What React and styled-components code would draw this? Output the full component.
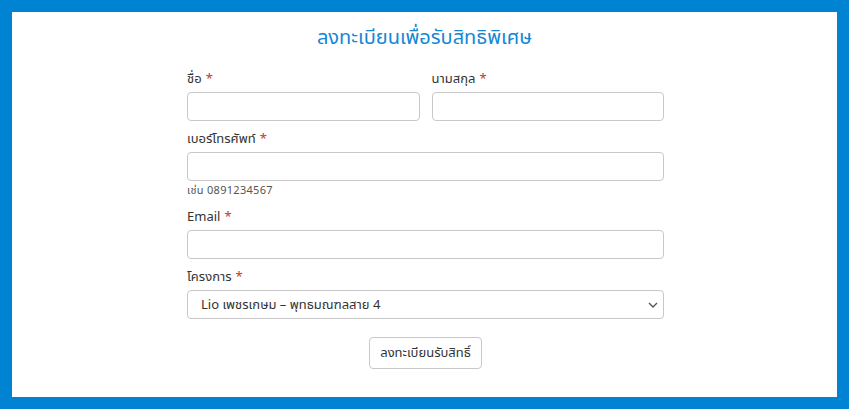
import React from "react";
import styled, { createGlobalStyle } from "styled-components";

const Global = createGlobalStyle`
  html, body { margin: 0; padding: 0; }
  body { font-family: "Noto Sans Thai", "Noto Sans", "DejaVu Sans", sans-serif; color: #333; }
`;

const Frame = styled.div`
  box-sizing: border-box;
  width: 849px;
  height: 409px;
  border: 12px solid #0083d3;
  background: #fff;
  display: flex;
  flex-direction: column;
  align-items: center;
`;

const Title = styled.h1`
  margin: 13px 0 19px;
  font-size: 20px;
  line-height: 26px;
  font-weight: 400;
  color: #1487d4;
`;

const Form = styled.form`
  width: 477px;
  margin-left: 2px;
  display: flex;
  flex-direction: column;
`;

const Row = styled.div`
  display: grid;
  grid-template-columns: ${(p) => (p.$cols === 2 ? "1fr 1fr" : "1fr")};
  gap: 12px;
  margin-bottom: ${(p) => p.$mb || 0}px;
`;

const Field = styled.div`
  display: flex;
  flex-direction: column;
`;

const Label = styled.label`
  font-size: 13px;
  line-height: 18px;
  color: #333;
  margin-bottom: 4px;
`;

const Star = styled.span`
  color: #c0392b;
  margin-left: 4px;
`;

const Input = styled.input`
  box-sizing: border-box;
  height: 29px;
  width: 100%;
  margin: 0;
  border: 1px solid #c8c8c8;
  border-radius: 4px;
  background: #fff;
  font: inherit;
  font-size: 13px;
`;

const Help = styled.div`
  font-size: 11px;
  color: #555;
  margin-top: 2px;
  line-height: 15px;
  letter-spacing: 0.3px;
`;

const Select = styled.select`
  box-sizing: border-box;
  appearance: none;
  -webkit-appearance: none;
  height: 29px;
  width: 100%;
  margin: 0;
  border: 1px solid #c8c8c8;
  border-radius: 4px;
  background: #fff
    url("data:image/svg+xml,%3Csvg xmlns='http://www.w3.org/2000/svg' width='10' height='6' viewBox='0 0 10 6'%3E%3Cpath d='M1 1l4 4 4-4' fill='none' stroke='%23555' stroke-width='1.4'/%3E%3C/svg%3E")
    no-repeat right 5px center;
  font: inherit;
  font-size: 13px;
  color: #333;
  padding: 0 24px 0 13px;
`;

const Actions = styled.div`
  display: flex;
  justify-content: center;
  margin-top: 18px;
`;

const Button = styled.button`
  box-sizing: border-box;
  height: 32px;
  padding: 0 10px;
  border: 1px solid #c8c8c8;
  border-radius: 4px;
  background: #fff;
  font: inherit;
  font-size: 13px;
  color: #333;
`;

export default function App() {
  return (
    <>
      <Global />
      <Frame>
        <Title>ลงทะเบียนเพื่อรับสิทธิพิเศษ</Title>
        <Form>
          <Row $cols={2} $mb={9}>
            <Field>
              <Label>ชื่อ<Star>*</Star></Label>
              <Input />
            </Field>
            <Field>
              <Label>นามสกุล<Star>*</Star></Label>
              <Input />
            </Field>
          </Row>
          <Row $mb={10}>
            <Field>
              <Label>เบอร์โทรศัพท์<Star>*</Star></Label>
              <Input />
              <Help>เช่น 0891234567</Help>
            </Field>
          </Row>
          <Row $mb={9}>
            <Field>
              <Label>Email<Star>*</Star></Label>
              <Input />
            </Field>
          </Row>
          <Row>
            <Field>
              <Label>โครงการ<Star>*</Star></Label>
              <Select defaultValue="lio">
                <option value="lio">Lio เพชรเกษม – พุทธมณฑลสาย 4</option>
              </Select>
            </Field>
          </Row>
          <Actions>
            <Button type="button">ลงทะเบียนรับสิทธิ์</Button>
          </Actions>
        </Form>
      </Frame>
    </>
  );
}
